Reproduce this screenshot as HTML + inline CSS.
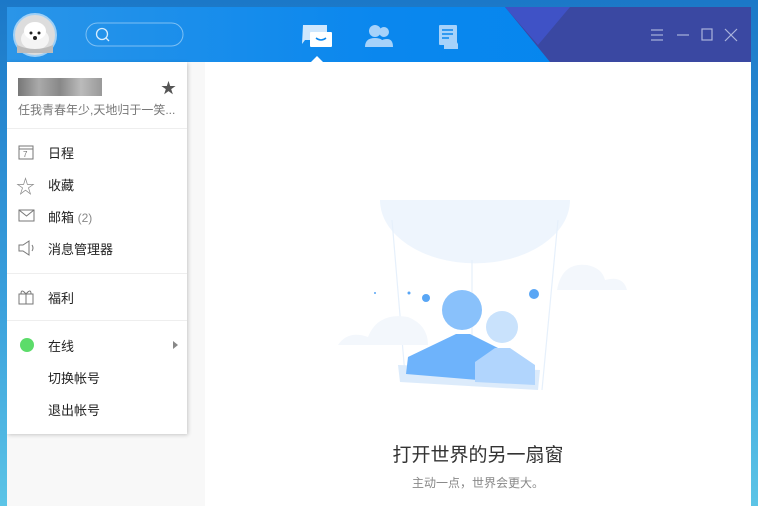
<!DOCTYPE html>
<html><head><meta charset="utf-8"><style>
*{margin:0;padding:0;box-sizing:border-box}
body{width:758px;height:506px;overflow:hidden;background:linear-gradient(180deg,#1b78c8,#3aa0dc 60%,#5cc4e6);font-family:"Liberation Sans","Noto Sans CJK SC",sans-serif;position:relative}
#win{position:absolute;left:7px;top:7px;width:744px;height:499px;background:#fff;overflow:hidden}
#hdr{position:absolute;left:0;top:0;width:744px;height:55px;background:linear-gradient(90deg,#2a95e8,#0a87ee 50%,#0286ef)}
#side{position:absolute;left:0;top:55px;width:198px;height:444px;background:#f8f8f8}
#menu{position:absolute;left:0;top:55px;width:180px;height:372px;background:#fff;box-shadow:1px 1px 4px rgba(0,0,0,.2)}
.it{position:absolute;left:41px;font-size:13px;color:#222}
.ic{position:absolute;left:11px}
.sep{position:absolute;left:0;width:180px;height:1px;background:#eee}
</style></head><body>
<div id="win">
<div id="hdr">
<svg width="744" height="55" style="position:absolute;left:0;top:0">
<polygon points="498,0 744,0 744,55 543,55" fill="#3a48a2"/>
<polygon points="498,0 563,0 531,38" fill="#3f52c6"/>
<circle cx="28" cy="28" r="21" fill="#ddd" stroke="#9fd0f6" stroke-width="2"/>
<ellipse cx="28" cy="32" rx="14" ry="11" fill="#f4f4f4"/><ellipse cx="28" cy="24" rx="11" ry="9" fill="#fff"/>
<circle cx="24" cy="26" r="1.5" fill="#222"/><circle cx="32" cy="26" r="1.5" fill="#222"/><circle cx="28" cy="31" r="2" fill="#222"/>
<path d="M10 38 Q28 46 46 38 L46 46 L10 46Z" fill="#bbb"/>
<rect x="79" y="16" width="97" height="23" rx="11.5" fill="none" stroke="#7ec0f4" stroke-width="1"/>
<circle cx="95" cy="27" r="5.5" fill="none" stroke="#d6ecfd" stroke-width="1.3"/><line x1="99" y1="31" x2="102" y2="34" stroke="#d6ecfd" stroke-width="1.3"/>
<path d="M296 18h24v15h-22l-3 4z" fill="#cfe7fd"/><rect x="303" y="25" width="22" height="15" rx="1" fill="#fff"/>
<path d="M309 31q5 4 10 0" stroke="#0a87ee" stroke-width="1.5" fill="none"/>
<polygon points="304,55 310,49 316,55" fill="#fff"/>
<circle cx="368" cy="24" r="6" fill="#a6d2fa"/><path d="M358 40q0-9 10-9q10 0 10 9z" fill="#a6d2fa"/>
<circle cx="377" cy="25" r="5" fill="#a6d2fa"/><path d="M372 40q0-8 8-8q6 0 6 8z" fill="#a6d2fa"/>
<rect x="432" y="18" width="18" height="20" rx="1" fill="#a6d2fa"/>
<line x1="435" y1="23" x2="446" y2="23" stroke="#0a87ee" stroke-width="1.5"/><line x1="435" y1="27" x2="446" y2="27" stroke="#0a87ee" stroke-width="1.5"/><line x1="435" y1="31" x2="442" y2="31" stroke="#0a87ee" stroke-width="1.5"/>
<circle cx="442" cy="37" r="5" fill="#a6d2fa"/><circle cx="447" cy="38" r="4" fill="#a6d2fa"/><rect x="437" y="37" width="14" height="5" fill="#a6d2fa"/>
<g stroke="#aab3dc" stroke-width="1.2" fill="none">
<line x1="644" y1="23" x2="656" y2="23"/><line x1="644" y1="28" x2="656" y2="28"/><line x1="644" y1="33" x2="656" y2="33"/>
<line x1="670" y1="28" x2="682" y2="28"/>
<rect x="695" y="22" width="10" height="11"/>
<line x1="718" y1="22" x2="730" y2="34"/><line x1="730" y1="22" x2="718" y2="34"/>
</g></svg>
</div>
<div id="side"></div>
<svg width="300" height="210" style="position:absolute;left:323px;top:183px" viewBox="0 0 300 210">
<path d="M50 10 A90 60 0 0 0 240 10Z" fill="#eef5fd"/>
<g stroke="#e6f0fb" stroke-width="1.2"><line x1="62" y1="30" x2="75" y2="185"/><line x1="228" y1="30" x2="212" y2="200"/><line x1="142" y1="70" x2="142" y2="180"/></g>
<path d="M8 155 q10-15 30-8 q10-25 40-20 q20 8 20 28z" fill="#f3f7fc"/>
<path d="M227 100 q5-28 30-25 q15 3 18 15 q18-5 22 10z" fill="#f3f7fc"/>
<path d="M68 175 L210 180 L208 200 L70 192z" fill="#dcebfb"/>
<circle cx="132" cy="120" r="20" fill="#89c1fb"/><path d="M78 167 L126 144 L140 144 L172 160 L172 192 L76 184z" fill="#6eb3fb"/>
<circle cx="172" cy="137" r="16" fill="#c9e2fc"/><path d="M145 172 L165 158 L180 158 L205 175 L205 195 L145 192z" fill="#b1d5fd"/>
<circle cx="96" cy="108" r="4" fill="#59a6f5"/><circle cx="204" cy="104" r="5" fill="#59a6f5"/><circle cx="79" cy="103" r="1.5" fill="#59a6f5"/><circle cx="45" cy="103" r="1" fill="#59a6f5"/>
</svg>
<div style="position:absolute;left:198px;top:433px;width:546px;text-align:center;font-size:19px;color:#333">打开世界的另一扇窗</div>
<div style="position:absolute;left:198px;top:467px;width:546px;text-align:center;font-size:12px;color:#888">主动一点，世界会更大。</div>
<div id="menu">
<div style="position:absolute;left:11px;top:16px;width:84px;height:18px;background:linear-gradient(90deg,#777,#aaa,#888,#bbb,#999)"></div>
<div style="position:absolute;left:154px;top:15px;font-size:15px;color:#555">★</div>
<div style="position:absolute;left:11px;top:39px;font-size:12px;color:#777">任我青春年少,天地归于一笑...</div>
<div class="sep" style="top:66px"></div>
<svg class="ic" style="top:82px" width="16" height="16"><rect x="1" y="2" width="14" height="13" fill="none" stroke="#777"/><line x1="1" y1="5" x2="15" y2="5" stroke="#777"/><text x="5" y="13" font-size="8" fill="#777">7</text></svg>
<div class="it" style="top:81px">日程</div>
<div class="ic" style="top:110px;font-size:19px;color:#888;left:9px">☆</div>
<div class="it" style="top:113px">收藏</div>
<svg class="ic" style="top:147px" width="17" height="14"><rect x="1" y="1" width="15" height="11" fill="none" stroke="#777"/><path d="M1 1l7.5 6l7.5-6" fill="none" stroke="#777"/></svg>
<div class="it" style="top:145px">邮箱 <span style="color:#888;font-size:12px">(2)</span></div>
<svg class="ic" style="top:178px" width="18" height="16"><path d="M1 5h4l6-4v14l-6-4h-4z" fill="none" stroke="#777"/><path d="M14 5q2 3 0 6" fill="none" stroke="#777"/></svg>
<div class="it" style="top:177px">消息管理器</div>
<div class="sep" style="top:211px"></div>
<svg class="ic" style="top:227px" width="16" height="16"><rect x="1" y="5" width="14" height="10" fill="none" stroke="#777"/><line x1="8" y1="5" x2="8" y2="15" stroke="#777"/><path d="M8 5q-5-6-5 0M8 5q5-6 5 0" fill="none" stroke="#777"/></svg>
<div class="it" style="top:226px">福利</div>
<div class="sep" style="top:258px"></div>
<div style="position:absolute;left:13px;top:276px;width:14px;height:14px;border-radius:50%;background:#5cdc6a"></div>
<div class="it" style="top:274px">在线</div>
<div style="position:absolute;left:166px;top:279px;width:0;height:0;border-left:5px solid #888;border-top:4px solid transparent;border-bottom:4px solid transparent"></div>
<div class="it" style="top:306px">切换帐号</div>
<div class="it" style="top:338px">退出帐号</div>
</div>
</div>
</body></html>
